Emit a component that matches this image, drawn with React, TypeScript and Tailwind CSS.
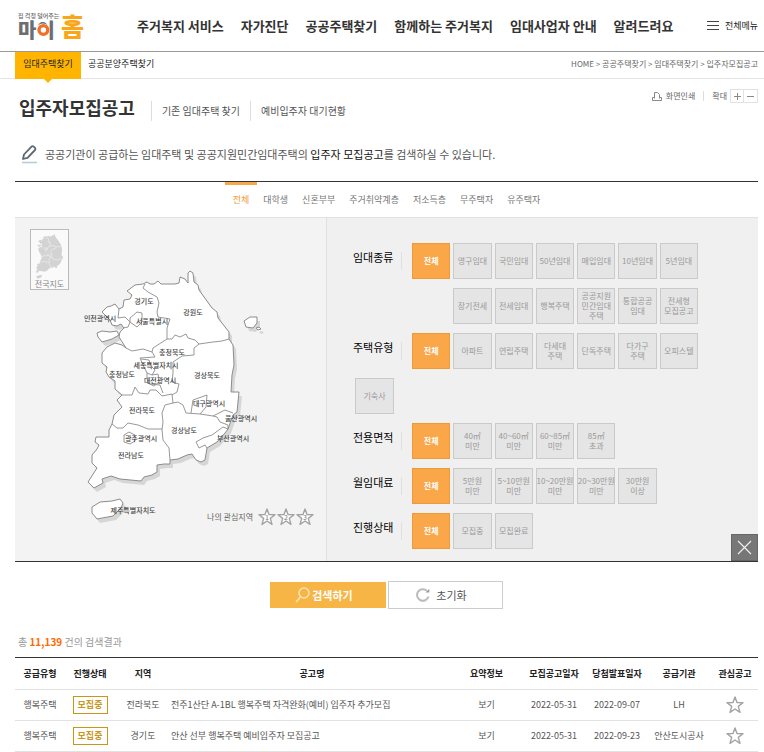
import { useState } from "react";
import clsx from "clsx";

const menus = ["주거복지 서비스", "자가진단", "공공주택찾기", "함께하는 주거복지", "임대사업자 안내", "알려드려요"];

const targets = ["전체", "대학생", "신혼부부", "주거취약계층", "저소득층", "무주택자", "유주택자"];

const filters: { label: string; options: string[]; more?: string[]; extra?: string[] }[] = [
  {
    label: "임대종류",
    options: ["영구임대", "국민임대", "50년임대", "매입임대", "10년임대", "5년임대"],
    more: ["장기전세", "전세임대", "행복주택", "공공지원\n민간임대\n주택", "통합공공\n임대", "전세형\n모집공고"],
  },
  {
    label: "주택유형",
    options: ["아파트", "연립주택", "다세대\n주택", "단독주택", "다가구\n주택", "오피스텔"],
    extra: ["기숙사"],
  },
  { label: "전용면적", options: ["40㎡\n미만", "40~60㎡\n미만", "60~85㎡\n미만", "85㎡\n초과"] },
  {
    label: "월임대료",
    options: ["5만원\n미만", "5~10만원\n미만", "10~20만원\n미만", "20~30만원\n미만", "30만원\n이상"],
  },
  { label: "진행상태", options: ["모집중", "모집완료"] },
];

const columns = [
  { name: "공급유형", width: "w-[50px]" },
  { name: "진행상태", width: "w-[50px]" },
  { name: "지역", width: "w-[56px]" },
  { name: "공고명", width: "" },
  { name: "요약정보", width: "w-[67px]" },
  { name: "모집공고일자", width: "w-[68px]" },
  { name: "당첨발표일자", width: "w-[58px]" },
  { name: "공급기관", width: "w-[66px]" },
  { name: "관심공고", width: "w-[46px]" },
];

const notices = [
  {
    type: "행복주택",
    region: "전라북도",
    title: "전주1산단 A-1BL 행복주택 자격완화(예비) 입주자 추가모집",
    posted: "2022-05-31",
    announced: "2022-09-07",
    agency: "LH",
  },
  {
    type: "행복주택",
    region: "경기도",
    title: "안산 선부 행복주택 예비입주자 모집공고",
    posted: "2022-05-31",
    announced: "2022-09-23",
    agency: "안산도시공사",
  },
];

const mainland =
  "M143 284 L135 285 L127 291 L132 295 L130 299 L124 300 L123 307 L119 309 L115 304 L111 306 L107 307 L102 312 L106 316 L110 320 L112 325 L117 326 L121 324 L124 328 L120 332 L119 337 L126 348 L122 345 L115 343 L107 347 L102 353 L102 363 L107 367 L106 372 L109 377 L115 381 L115 389 L122 395 L117 400 L122 407 L114 415 L112 424 L109 430 L109 437 L96 437 L95 442 L99 445 L97 449 L92 455 L92 463 L97 468 L88 482 L94 488 L103 483 L102 479 L111 476 L120 479 L141 481 L144 477 L152 475 L157 472 L157 465 L164 464 L170 464 L170 460 L178 459 L187 455 L192 454 L196 460 L201 462 L205 460 L207 448 L217 442 L225 433 L228 429 L233 415 L237 412 L239 392 L231 392 L232 375 L234 365 L233 345 L229 339 L229 332 L218 318 L217 312 L212 308 L199 290 L198 285 L194 282 L193 273 L190 271 L188 273 L188 283 L185 279 L180 277 L179 283 L175 284 L161 284 L158 281 L154 284 L150 284 L147 282 Z";

const islands = [
  "M97 333 L102 331 L110 332 L117 331 L119 335 L112 339 L102 342 L98 337 Z",
  "M92 507 L100 502 L112 501 L120 499 L123 503 L121 508 L113 516 L97 519 L92 513 Z",
  "M244 321 L250 317 L257 317 L257 323 L253 328 L246 327 Z",
  "M256 328 L259 327 L261 329 L258 330 Z",
];

const borders = [
  "M145 284 L143 288 L148 292 L157 297 L159 303 L157 312 L158 317 L170 319 L167 328 L167 339",
  "M167 339 L153 348 L152 352 L143 349 L132 351 L126 348",
  "M167 339 L172 339 L175 335 L180 337 L186 334 L188 338 L195 340 L199 344 L213 342 L222 341 L229 339",
  "M199 344 L194 348 L194 355 L182 356 L173 362 L173 373 L172 382 L179 384 L177 392 L172 395",
  "M152 352 L155 357 L140 358 L143 365 L147 373 M150 384 L160 385 L163 393",
  "M122 395 L132 395 L135 387 L139 393 L148 394 L150 390 L156 390 L162 396 L172 394",
  "M172 394 L173 403 L165 405 L162 413 L163 422 L162 430 L163 440 L169 448 L170 460",
  "M112 424 L117 428 L123 428 L128 423 L138 425 L148 429 L162 429",
  "M173 403 L178 402 L183 405 L186 413 L200 414 L213 416 L225 410 L233 413",
  "M191 413 L193 400 L207 395 L206 407 L200 414",
  "M213 416 L217 417 L220 422 L228 425 L228 429",
  "M207 448 L205 445 L199 448 L196 442 L203 438 L212 435 L223 427 L228 429",
  "M119 309 L118 318 L125 317 L130 322 L128 327 L123 328",
  "M130 318 L137 312 L142 313 L142 322 L137 327 L130 322 Z",
  "M147 373 L152 375 L158 374 L159 382 L154 386 L148 383 L147 378 Z",
  "M141 359 L149 360 L151 366 L155 370 L152 375",
  "M124 435 L129 432 L135 435 L135 441 L130 444 L124 442 Z",
];

const regions = [
  { name: "경기도", x: 144, y: 304 },
  { name: "인천광역시", x: 100, y: 321 },
  { name: "서울특별시", x: 152, y: 324 },
  { name: "강원도", x: 193, y: 315 },
  { name: "충청북도", x: 172, y: 355 },
  { name: "세종특별자치시", x: 156, y: 368 },
  { name: "충청남도", x: 122, y: 377 },
  { name: "대전광역시", x: 160, y: 383 },
  { name: "경상북도", x: 207, y: 378 },
  { name: "대구광역시", x: 209, y: 406 },
  { name: "울산광역시", x: 241, y: 421 },
  { name: "부산광역시", x: 233, y: 441 },
  { name: "경상남도", x: 184, y: 433 },
  { name: "전라북도", x: 142, y: 413 },
  { name: "광주광역시", x: 141, y: 441 },
  { name: "전라남도", x: 131, y: 458 },
  { name: "제주특별자치도", x: 133, y: 513 },
];

function Logo() {
  return (
    <svg width="68" height="46" viewBox="0 0 68 46" aria-label="마이홈">
      <text x="0" y="15" fontSize="6" fontWeight="500" fill="#666">
        집 걱정 덜어주는
      </text>
      <text x="0" y="35" fontSize="20" fontWeight="900" fill="#6d6e71">
        마이
      </text>
      <circle cx="25" cy="27" r="6.6" fill="#fff" />
      <circle cx="25.4" cy="27" r="4.4" fill="none" stroke="#f0702a" strokeWidth="3.4" />
      <text x="43" y="33" fontSize="25" fontWeight="900" fill="#faa61a">
        홈
      </text>
    </svg>
  );
}

function StarIcon({ label }: { label?: string }) {
  return (
    <svg width="18" height="18" viewBox="0 0 18 18" aria-hidden="true">
      <path
        d="M9 1 L11 6.6 L17 6.8 L12.3 10.4 L14 16.4 L9 13 L4 16.4 L5.7 10.4 L1 6.8 L7 6.6 Z"
        fill="#fff"
        stroke="#a3a3a3"
        strokeWidth="1.4"
        strokeLinejoin="round"
      />
      {label && (
        <text x="9" y="12" fontSize="7" textAnchor="middle" fill="#777">
          {label}
        </text>
      )}
    </svg>
  );
}

function KoreaMap() {
  return (
    <svg viewBox="15 218 311 343" className="h-[343px] w-full" role="img" aria-label="지역 선택">
      <g transform="translate(3 4)" fill="#d6d6d6">
        <path d={mainland} />
        {islands.map((d) => (
          <path key={d} d={d} />
        ))}
      </g>
      <g fill="#fff" stroke="#8c8c8c" strokeWidth="1" strokeLinejoin="round">
        <path d={mainland} />
        {islands.map((d) => (
          <path key={d} d={d} />
        ))}
      </g>
      <g fill="none" stroke="#8c8c8c" strokeWidth="0.9" strokeLinejoin="round">
        {borders.map((d) => (
          <path key={d} d={d} />
        ))}
      </g>
      <g fontSize="7" fontWeight="500" textAnchor="middle" fill="#444">
        {regions.map((region) => (
          <text key={region.name} x={region.x} y={region.y}>
            {region.name}
          </text>
        ))}
      </g>
    </svg>
  );
}

function Chip({ text, active = false }: { text: string; active?: boolean }) {
  return (
    <button
      type="button"
      className={clsx(
        "flex h-9 items-center justify-center whitespace-pre border text-center text-[8px] leading-[10px]",
        active ? "border-[#f19a35] bg-[#faa74a] font-bold text-white" : "border-[#cacaca] bg-[#e5e5e5] text-[#999]"
      )}
    >
      {text}
    </button>
  );
}

function Header() {
  return (
    <header className="flex h-[52px] items-center border-b border-[#999] pl-[18px] pr-[6px]">
      <a href="#">
        <Logo />
      </a>
      <nav className="ml-[51px] flex gap-[17px] whitespace-nowrap text-[13px] font-bold text-[#333]">
        {menus.map((menu) => (
          <a key={menu} href="#">
            {menu}
          </a>
        ))}
      </nav>
      <button type="button" className="ml-auto flex items-center gap-1.5 whitespace-nowrap text-[9px] text-[#222]">
        <svg width="12" height="11" viewBox="0 0 12 11" stroke="#444" aria-hidden="true">
          <path d="M0 1.5 H12 M0 5.5 H12 M0 9.5 H12" />
        </svg>
        전체메뉴
      </button>
    </header>
  );
}

function SubNav() {
  return (
    <div className="flex h-[27px] items-start justify-between border-b border-[#e5e5e5] pl-[15px] pr-[6px] text-[9px] leading-6">
      <div className="flex">
        <a href="#" className="relative h-[27px] w-[66px] bg-[#ffb400] text-center text-[#222]">
          임대주택찾기
          <svg width="8" height="4" viewBox="0 0 8 4" className="absolute left-[29px] top-[27px]" aria-hidden="true">
            <path d="M0 0 H8 L4 4 Z" fill="#ffb400" />
          </svg>
        </a>
        <a href="#" className="pl-[7px] text-[#222]">
          공공분양주택찾기
        </a>
      </div>
      <p className="whitespace-nowrap text-[8px] text-[#666]">HOME &gt; 공공주택찾기 &gt; 임대주택찾기 &gt; 입주자모집공고</p>
    </div>
  );
}

function PageTitle() {
  return (
    <div className="flex h-[56px] justify-between">
      <div className="flex items-center">
        <h1 className="pl-1 text-[18px] font-bold text-[#333]">입주자모집공고</h1>
        <div className="ml-4 mt-2 flex text-[10px] leading-5 text-[#555]">
          <a href="#" className="border-l border-[#ddd] px-[10px]">
            기존 임대주택 찾기
          </a>
          <a href="#" className="border-l border-[#ddd] px-[10px]">
            예비입주자 대기현황
          </a>
        </div>
      </div>
      <div className="mt-[10px] flex h-[14px] items-center text-[8px] text-[#666]">
        <button type="button" className="flex items-center gap-1">
          <svg width="10" height="11" viewBox="0 0 10 11" fill="none" stroke="#888" aria-hidden="true">
            <path d="M2.5 7.5 V1.5 H5.5 L7.5 3.5 V7.5" />
            <path d="M2.5 6.5 H0.5 V9.5 H9.5 V6.5 H7.5" />
          </svg>
          화면인쇄
        </button>
        <span className="mx-2 h-[10px] w-px bg-[#ddd]" />
        <span className="mr-[3px]">확대</span>
        <button type="button" aria-label="확대" className="flex h-[14px] w-[14px] items-center justify-center border border-[#e2e2e2]">
          <svg width="7" height="7" viewBox="0 0 7 7" stroke="#888" aria-hidden="true">
            <path d="M0 3.5 H7 M3.5 0 V7" />
          </svg>
        </button>
        <button
          type="button"
          aria-label="축소"
          className="flex h-[14px] w-[14px] items-center justify-center border border-l-0 border-[#e2e2e2]"
        >
          <svg width="7" height="7" viewBox="0 0 7 7" stroke="#888" aria-hidden="true">
            <path d="M0 3.5 H7" />
          </svg>
        </button>
      </div>
    </div>
  );
}

function SearchPanel() {
  const [target, setTarget] = useState("전체");

  return (
    <section className="border-y border-[#333]">
      <div className="flex h-9 justify-center gap-[14px] border-b border-[#e2e2e2] text-[9px] text-[#777]">
        {targets.map((name) => (
          <button
            key={name}
            type="button"
            onClick={() => setTarget(name)}
            className={clsx("relative whitespace-nowrap", name === target && "text-[#f39a3c]")}
          >
            {name === target && <span className="absolute -inset-x-2 top-0 h-[3px] bg-[#faa74a]" />}
            {name}
          </button>
        ))}
      </div>

      <div className="flex">
        <div className="relative w-[312px] shrink-0 border-r border-[#e0e0e0] bg-[#f3f3f3]">
          <KoreaMap />
          <button
            type="button"
            className="absolute left-[15px] top-[11px] flex h-[61px] w-[39px] flex-col items-center border border-[#bbb] bg-[#fafafa] pt-[3px] text-[8px] leading-[10px] text-[#888]"
          >
            <svg width="31" height="46" viewBox="86 266 156 256" aria-hidden="true">
              <path d={mainland} fill="#d3d3d3" />
              {islands.slice(0, 2).map((d) => (
                <path key={d} d={d} fill="#d3d3d3" />
              ))}
              <g fill="none" stroke="#f3f3f3" strokeWidth="3">
                {borders.slice(0, 9).map((d) => (
                  <path key={d} d={d} />
                ))}
              </g>
            </svg>
            전국지도
          </button>
          <div className="absolute bottom-[35px] right-[12px] flex items-center gap-px text-[8px] text-[#666]">
            <span className="mr-1">나의 관심지역</span>
            <StarIcon label="1" />
            <StarIcon label="2" />
            <StarIcon label="3" />
          </div>
        </div>

        <div className="relative flex grow flex-col gap-[9px] bg-[#f0f0f0] pl-[26px] pt-[25px]">
          {filters.map((filter) => (
            <div key={filter.label}>
              <div className="flex items-start gap-[10px]">
                <h2 className="mt-[9px] h-[18px] w-[49px] border-r border-[#e0e0e0] text-[11px] leading-[11px] text-black">
                  {filter.label}
                </h2>
                <div className="grid w-[286px] grid-cols-7 gap-x-[3px] gap-y-[9px]">
                  <Chip text="전체" active />
                  {filter.options.map((option) => (
                    <Chip key={option} text={option} />
                  ))}
                  {filter.more && <span />}
                  {filter.more?.map((option) => (
                    <Chip key={option} text={option} />
                  ))}
                </div>
              </div>
              {filter.extra && (
                <div className="ml-0.5 mt-[9px] grid w-[39px]">
                  {filter.extra.map((option) => (
                    <Chip key={option} text={option} />
                  ))}
                </div>
              )}
            </div>
          ))}
          <button
            type="button"
            aria-label="닫기"
            className="absolute bottom-0 right-0 flex h-[27px] w-[27px] items-center justify-center border border-[#666] bg-[#777]"
          >
            <svg width="15" height="15" viewBox="0 0 15 15" stroke="#eee" strokeWidth="1.2" aria-hidden="true">
              <path d="M1 1 L14 14 M14 1 L1 14" />
            </svg>
          </button>
        </div>
      </div>
    </section>
  );
}

function NoticeTable() {
  return (
    <table className="w-full table-fixed border-t border-[#333] text-center text-[9px] text-[#555]">
      <thead>
        <tr className="h-8 border-b border-[#e2e2e2] text-[#222]">
          {columns.map((column) => (
            <th key={column.name} className={clsx("whitespace-nowrap p-0 font-bold", column.width)}>
              {column.name}
            </th>
          ))}
        </tr>
      </thead>
      <tbody>
        {notices.map((notice) => (
          <tr key={notice.title} className="h-[31px] border-b border-[#e2e2e2]">
            <td>{notice.type}</td>
            <td>
              <span className="inline-block h-[18px] w-[35px] border border-[#c8961a] align-middle font-bold leading-4 text-[#c8961a]">
                모집중
              </span>
            </td>
            <td>{notice.region}</td>
            <td className="text-left">
              <a href="#">{notice.title}</a>
            </td>
            <td>
              <a href="#">보기</a>
            </td>
            <td>{notice.posted}</td>
            <td>{notice.announced}</td>
            <td>{notice.agency}</td>
            <td>
              <button type="button" aria-label="관심공고 등록" className="mx-auto block">
                <StarIcon />
              </button>
            </td>
          </tr>
        ))}
      </tbody>
    </table>
  );
}

export default function App() {
  return (
    <div className="bg-white font-['Noto_Sans_CJK_KR',sans-serif]">
      <Header />
      <SubNav />
      <main className="pl-[15px] pr-[6px]">
        <PageTitle />
        <p className="flex h-[46px] items-center gap-[7px] pb-2 pl-1.5 text-[11px] text-[#555]">
          <svg width="17" height="20" viewBox="0 0 17 20" fill="none" aria-hidden="true">
            <path
              d="M2 15 L3 10.5 L10.5 2.6 Q11.5 1.6 12.7 2.6 L14 3.9 Q15 5 14 6 L6.5 13.8 Z"
              stroke="#5d6770"
              strokeWidth="1.8"
              strokeLinejoin="round"
            />
            <path d="M1 18.5 H16" stroke="#b9cbd6" strokeWidth="1.6" />
          </svg>
          <span>
            공공기관이 공급하는 임대주택 및 공공지원민간임대주택의 <span className="text-[#111]">입주자 모집공고</span>를
            검색하실 수 있습니다.
          </span>
        </p>
        <SearchPanel />
        <div className="mt-[19px] flex items-center justify-center gap-0.5 text-[11px]">
          <button
            type="button"
            className="flex h-[26px] w-[116px] items-center justify-center gap-0.5 bg-[#f6b545] pr-2 font-bold text-white"
          >
            <svg width="15" height="16" viewBox="0 0 15 16" fill="none" stroke="#fde3b0" strokeWidth="1.6" aria-hidden="true">
              <circle cx="9" cy="6" r="5" />
              <path d="M5.5 10 L1 15" />
            </svg>
            검색하기
          </button>
          <button
            type="button"
            className="flex h-7 w-[115px] items-center justify-center gap-[6px] border border-[#ccc] pr-2 text-[#555]"
          >
            <svg width="14" height="14" viewBox="0 0 14 14" fill="none" stroke="#bbb" strokeWidth="2" aria-hidden="true">
              <path d="M12.5 8.5 A5.8 5.8 0 1 1 11 2.9" />
              <path d="M9.5 4.5 H13.3 V1 Z" fill="#999" stroke="none" />
            </svg>
            초기화
          </button>
        </div>
        <p className="mb-[6px] mt-6 pl-[3px] text-[10px] leading-[18px] text-[#999]">
          총 <strong className="text-[#ff6a00]">11,139</strong> 건의 검색결과
        </p>
        <NoticeTable />
      </main>
    </div>
  );
}
